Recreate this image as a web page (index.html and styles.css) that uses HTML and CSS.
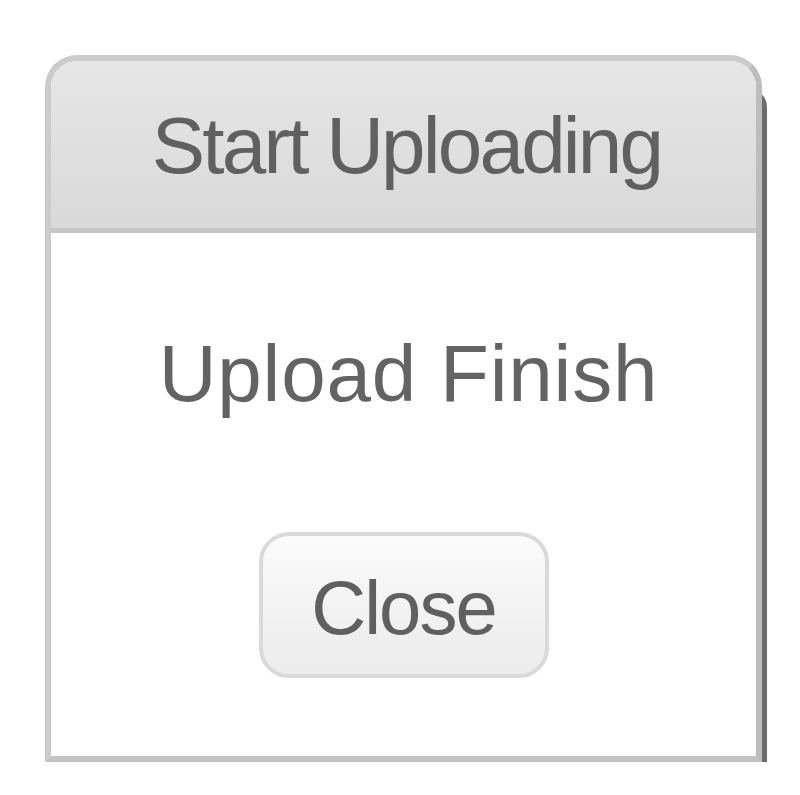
FILE: index.html
```html
<!DOCTYPE html>
<html>
<head>
<meta charset="utf-8">
<link rel="stylesheet" href="styles.css">
</head>
<body>
<div class="dialog">
  <div class="dialog-header">
    <span class="dialog-title">Start Uploading</span>
  </div>
  <div class="dialog-body">
    <p class="dialog-message">Upload Finish</p>
    <button class="dialog-button" type="button">Close</button>
  </div>
</div>
</body>
</html>
```
FILE: styles.css
```css
html, body {
  margin: 0;
  padding: 0;
  background: #ffffff;
}

body {
  font-family: "Liberation Sans", Arial, sans-serif;
}

.dialog {
  margin: 55px 0 0 45px;
  width: 717px;
  height: 707px;
  box-sizing: border-box;
  border: 6px solid #cbcbcb;
  border-right-color: #bdbdbd;
  border-bottom-color: #c4c4c4;
  border-radius: 32px 32px 0 0;
  background: #ffffff;
  box-shadow: 19px 20px 0 -14px #6c6c6c;
  display: flex;
  flex-direction: column;
  filter: blur(0.6px);
}

.dialog-header {
  height: 167px;
  border-bottom: 5px solid #c6c6c6;
  border-radius: 26px 26px 0 0;
  background: linear-gradient(#e6e6e6, #d9d9d9);
  display: flex;
  align-items: center;
  justify-content: center;
}

.dialog-title {
  font-size: 80px;
  line-height: 1;
  letter-spacing: -2.8px;
  color: #606060;
  padding: 2px 0 0 6px;
}

.dialog-body {
  display: flex;
  flex-direction: column;
  align-items: center;
  padding-top: 101px;
}

.dialog-message {
  margin: 0;
  padding-left: 10px;
  font-size: 80px;
  line-height: 80px;
  letter-spacing: 0.8px;
  color: #636363;
}

.dialog-button {
  margin-top: 118px;
  width: 290px;
  height: 146px;
  box-sizing: border-box;
  border: 4px solid #dadada;
  border-radius: 30px;
  background: linear-gradient(#fbfbfb, #ebebeb);
  font-family: "Liberation Sans", Arial, sans-serif;
  font-size: 76px;
  line-height: 76px;
  letter-spacing: -2px;
  color: #606060;
  padding: 6px 0 0 0;
}
```
